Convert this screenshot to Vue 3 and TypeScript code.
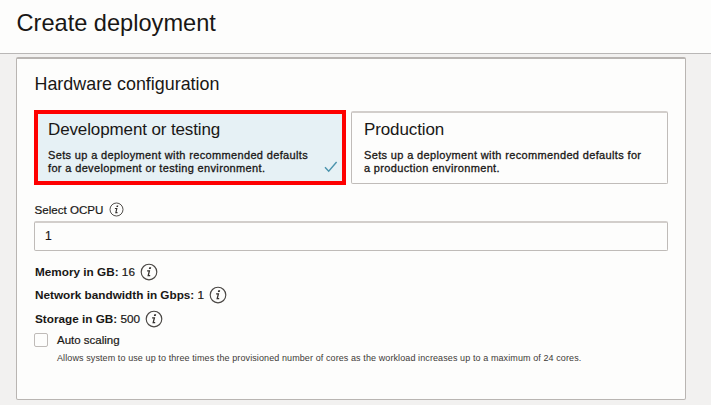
<script setup lang="ts">
import { ref } from 'vue'

interface Shape {
  id: string
  title: string
  lines: string[]
}

interface Spec {
  label: string
  value: string
}

const shapes: Shape[] = [
  {
    id: 'dev',
    title: 'Development or testing',
    lines: ['Sets up a deployment with recommended defaults', 'for a development or testing environment.'],
  },
  {
    id: 'prod',
    title: 'Production',
    lines: ['Sets up a deployment with recommended defaults for', 'a production environment.'],
  },
]

const specs: Spec[] = [
  { label: 'Memory in GB:', value: '16' },
  { label: 'Network bandwidth in Gbps:', value: '1' },
  { label: 'Storage in GB:', value: '500' },
]

const selected = ref('dev')
const ocpu = ref('1')
const autoScaling = ref(false)
</script>

<template>
  <div class="page">
    <header class="header">
      <h1>Create deployment</h1>
    </header>
    <main class="panel">
      <h2>Hardware configuration</h2>
      <div class="shapes">
        <div
          v-for="shape in shapes"
          :key="shape.id"
          class="shape"
          :class="{ selected: selected === shape.id }"
          @click="selected = shape.id"
        >
          <h3>{{ shape.title }}</h3>
          <p>
            <span v-for="line in shape.lines" :key="line" class="line">{{ line }}</span>
          </p>
          <svg v-if="selected === shape.id" class="check" viewBox="0 0 14 12">
            <path d="M1 6.2 L4.7 10.3 L12.6 1" />
          </svg>
        </div>
      </div>

      <div class="field-label">
        <label for="ocpu">Select OCPU</label>
        <svg class="info small" viewBox="0 0 18 18">
          <circle cx="9" cy="9" r="7.8" />
          <path class="dot" d="M9.3 4.3h1.9l-.5 1.8H8.8z" />
          <path class="stem" d="M7.1 7.8h2.3L8.2 12.7h2" />
        </svg>
      </div>
      <input id="ocpu" v-model="ocpu" class="ocpu" type="text" />

      <div class="specs">
        <div v-for="spec in specs" :key="spec.label" class="spec">
          <span class="spec-text"><b>{{ spec.label }}</b> {{ spec.value }}</span>
          <svg class="info" viewBox="0 0 18 18">
            <circle cx="9" cy="9" r="7.8" />
            <path class="dot" d="M9.3 4.3h1.9l-.5 1.8H8.8z" />
            <path class="stem" d="M7.1 7.8h2.3L8.2 12.7h2" />
          </svg>
        </div>
      </div>

      <label class="auto">
        <input v-model="autoScaling" type="checkbox" />
        <span>Auto scaling</span>
      </label>
      <p class="hint">
        Allows system to use up to three times the provisioned number of cores as the workload increases up to a maximum of 24 cores.
      </p>
    </main>
  </div>
</template>

<style>
body {
  margin: 0;
}
</style>

<style scoped>
.page {
  box-sizing: border-box;
  height: 405px;
  overflow: hidden;
  background: #f2f1f0;
  color: #191715;
  font-family: "Liberation Sans", Arial, sans-serif;
}
h1,
h2,
h3,
p {
  margin: 0;
  font-weight: 400;
}
.header {
  box-sizing: border-box;
  height: 54px;
  padding: 8px 17px 0;
  background: #fdfdfc;
  border-bottom: 1px solid #b9b7b6;
}
h1 {
  margin-left: -0.5px;
  font-size: 23.6px;
  line-height: 30px;
}
.panel {
  box-sizing: border-box;
  width: 670px;
  height: 343px;
  margin: 3px 0 0 16px;
  padding: 14px 17px 0;
  background: #fdfdfc;
  border: 1px solid #b9b5b2;
  border-top-width: 2px;
  border-radius: 2px;
}
h2 {
  margin-left: 0.5px;
  font-size: 17.9px;
  line-height: 22px;
}
.shapes {
  display: grid;
  grid-template-columns: 312px 317px;
  gap: 5px;
  height: 75px;
  margin-top: 15px;
}
.shape {
  position: relative;
  box-sizing: border-box;
  height: 73px;
  margin-top: 1px;
  padding: 6px 12px 0;
  border: 1px solid #c0bcb9;
  border-top: 2px solid #d2cecb;
  border-radius: 2px;
}
.shape.selected {
  height: 75px;
  margin-top: 0;
  padding: 5px 10px 0;
  background: #e6f1f5;
  border: 4px solid #fe0000;
  border-radius: 0;
}
h3 {
  font-size: 17px;
  line-height: 22px;
  letter-spacing: -0.12px;
}
.shape p {
  margin-top: 8px;
  font-size: 11px;
  line-height: 12.5px;
  letter-spacing: 0.35px;
  -webkit-text-stroke: 0.3px #191715;
}
.line {
  display: block;
  white-space: nowrap;
}
.check {
  position: absolute;
  right: 4px;
  bottom: 8px;
  width: 14px;
  height: 12px;
  fill: none;
  stroke: #4b94ad;
  stroke-width: 1.4;
}
.field-label {
  display: flex;
  align-items: center;
  gap: 5.5px;
  height: 16px;
  margin: 16px 0 0 0.5px;
  font-size: 11.6px;
  -webkit-text-stroke: 0.2px #191715;
}
.info {
  width: 18px;
  height: 18px;
  fill: none;
  stroke: #4a4744;
  stroke-width: 1.15;
}
.info.small {
  width: 15px;
  height: 15px;
}
.info .dot {
  fill: #33302e;
  stroke: none;
}
.info .stem {
  stroke: #33302e;
  stroke-width: 1.3;
}
.ocpu {
  display: block;
  box-sizing: border-box;
  width: 634px;
  height: 30px;
  margin: 4px 0 0;
  padding: 0 10px 1px;
  background: #fdfdfc;
  border: 1px solid #bfbbb8;
  border-top: 2px solid #d2cecb;
  border-radius: 2px;
  color: #191715;
  font: 12px "Liberation Sans", Arial, sans-serif;
  -webkit-text-stroke: 0.2px #191715;
  outline: none;
}
.specs {
  margin: 9px 0 0 1px;
}
.spec {
  display: flex;
  align-items: center;
  gap: 5px;
  height: 23.6px;
  font-size: 11.75px;
  -webkit-text-stroke: 0.2px #191715;
}
.spec-text b {
  -webkit-text-stroke: 0;
}
.spec-text {
  margin-top: -1px;
  white-space: pre;
}
.auto {
  display: flex;
  align-items: center;
  gap: 9px;
  height: 16px;
  margin-top: 1px;
  font-size: 11.5px;
  -webkit-text-stroke: 0.2px #191715;
}
.auto input {
  appearance: none;
  box-sizing: border-box;
  width: 14px;
  height: 14px;
  margin: 0;
  border: 1px solid #bfbbb8;
  border-radius: 2px;
}
.hint {
  margin: 4px 0 0 23px;
  color: #3d3a37;
  font-size: 9px;
  line-height: 12px;
  letter-spacing: 0.097px;
  white-space: nowrap;
}
</style>
